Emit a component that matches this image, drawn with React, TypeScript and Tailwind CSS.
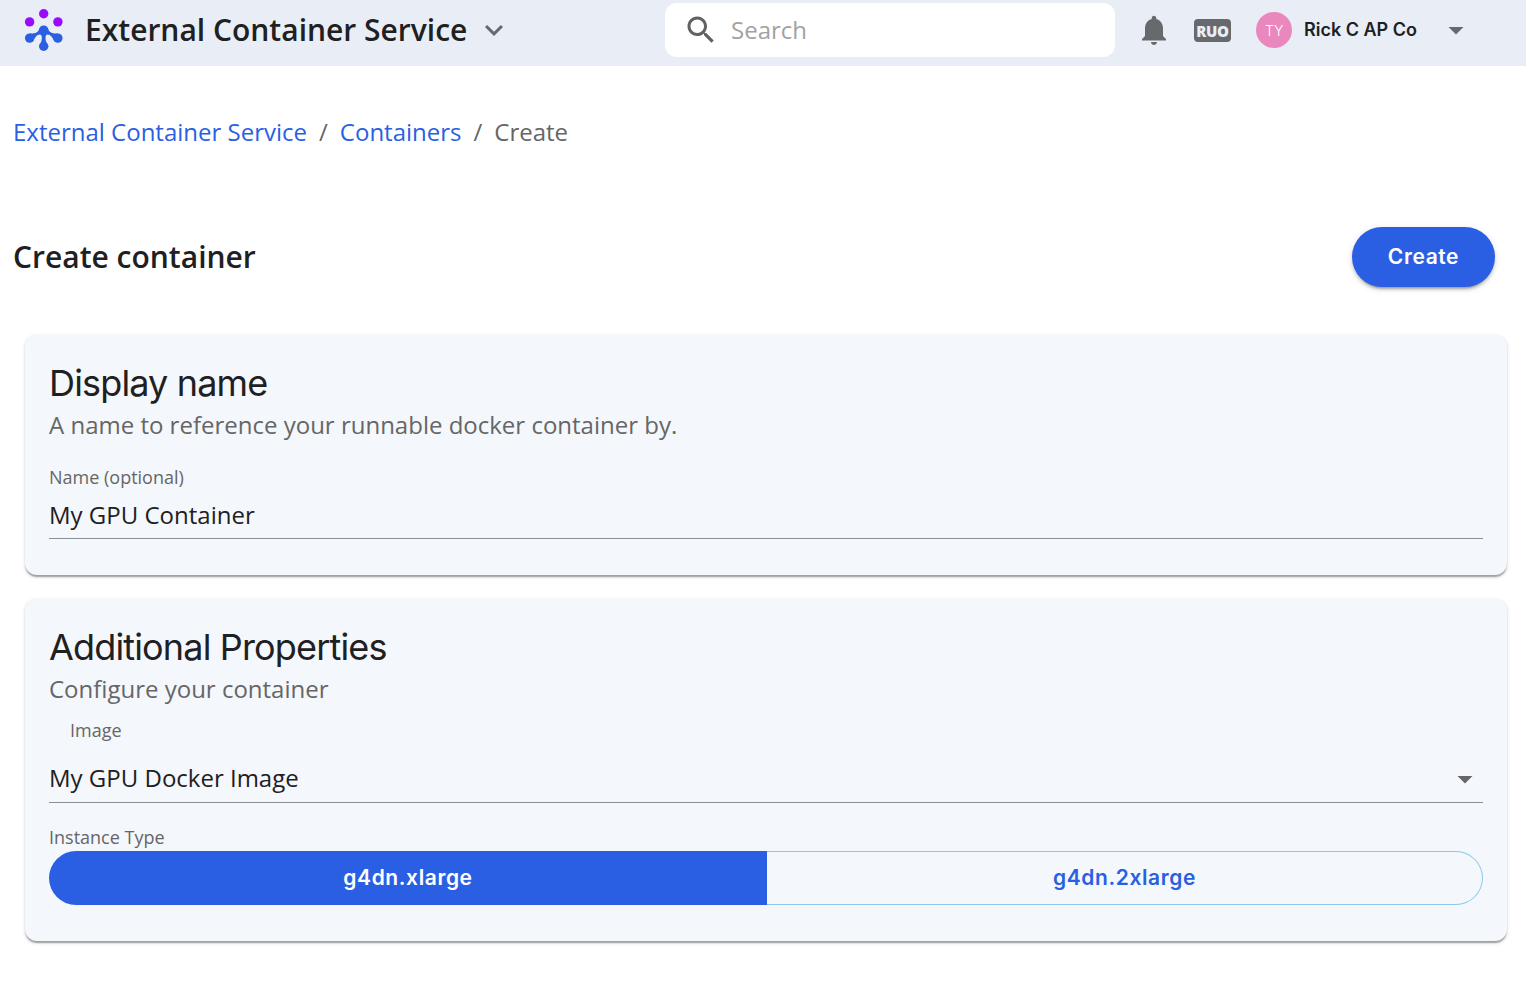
import React from "react";

const OS = "font-['Open_Sans',sans-serif]";

function Logo() {
  return (
    <svg className="ml-[24px] shrink-0" width="40" height="44" viewBox="0 0 40 44">
      <g fill="#9a0bfb">
        <circle cx="19.7" cy="5.7" r="4.7" />
        <circle cx="5.6" cy="13.9" r="4.7" />
        <circle cx="33.9" cy="13.9" r="4.7" />
      </g>
      <g fill="#2a5fe3">
        <circle cx="5.6" cy="30.1" r="4.7" />
        <circle cx="33.9" cy="30.1" r="4.7" />
        <circle cx="19.7" cy="38.3" r="4.7" />
        <path d="M19.7 17.4C22.6 17.4 24 19.4 24.5 21.4C25.3 24.6 28.5 25.6 33.9 25.4L30.3 33.2C28.5 29.2 26.6 26.6 23.6 26.4C21.2 26.4 21 30.6 22.6 35H16.8C18.4 30.6 18.2 26.4 15.8 26.4C12.8 26.6 11 29.2 9.2 33.2L5.6 25.4C11 25.6 14.1 24.6 14.9 21.4C15.4 19.4 16.8 17.4 19.7 17.4Z" />
      </g>
    </svg>
  );
}

function MIcon({ d, className }: { d: string; className: string }) {
  return (
    <svg className={`shrink-0 ${className}`} width="36" height="36" viewBox="0 0 24 24" fill="currentColor">
      <path d={d} />
    </svg>
  );
}

const CARET = "M7 10l5 5 5-5z";
const CHEVRON = "M7.41 8.59 12 13.17l4.59-4.58L18 10l-6 6-6-6 1.41-1.41z";
const SEARCH =
  "M15.5 14h-.79l-.28-.27C15.41 12.59 16 11.11 16 9.5 16 5.91 13.09 3 9.5 3S3 5.91 3 9.5 5.91 16 9.5 16c1.61 0 3.09-.59 4.23-1.57l.27.28v.79l5 4.99L20.49 19l-4.99-5zm-6 0C7.01 14 5 11.99 5 9.5S7.01 5 9.5 5 14 7.01 14 9.5 11.99 14 9.5 14z";
const BELL =
  "M12 22c1.1 0 2-.9 2-2h-4c0 1.1.89 2 2 2zm6-6v-5c0-3.07-1.64-5.64-4.5-6.32V4c0-.83-.67-1.5-1.5-1.5s-1.5.67-1.5 1.5v.68C7.63 5.36 6 7.92 6 11v5l-2 2v1h16v-1l-2-2z";

const CARD =
  "mx-[25px] w-[1482px] rounded-[12px] bg-[#f4f7fc] px-[24px] shadow-[0_3px_1.5px_-1.5px_rgba(0,0,0,0.2),0_1.5px_1.5px_0_rgba(0,0,0,0.14),0_1.5px_4.5px_0_rgba(0,0,0,0.12)]";
const H2 = "font-[Inter,sans-serif] text-[36px] leading-[50px] tracking-[-0.84px]";

export default function App() {
  return (
    <div className={`h-[990px] w-[1526px] overflow-hidden bg-white text-[#1f2022] ${OS}`}>
      <header className="flex h-[66px] items-start bg-[#e9eef6]">
        <div className="flex h-[60px] items-center">
          <Logo />
          <span className="ml-[21px] whitespace-nowrap text-[30px] font-semibold leading-[40px]">External Container Service</span>
          <MIcon d={CHEVRON} className="ml-[9px] text-[#666a6d]" />
        </div>
        <div className="ml-auto mt-[3px] flex h-[54px] w-[450px] items-center rounded-[12px] bg-white">
          <MIcon d={SEARCH} className="ml-[18px] text-[#616161]" />
          <span className="ml-[12px] text-[24px] text-[#a2a2a2]">Search</span>
        </div>
        <div className="flex h-[60px] w-[411px] items-center font-[Inter,sans-serif]">
          <MIcon d={BELL} className="ml-[21px] text-[#666a6d]" />
          <span className={`ml-[22px] mt-px flex h-[23px] w-[37px] items-center justify-center rounded-[4px] bg-[#666a6d] text-[15px] font-extrabold leading-[22px] tracking-[-0.4px] text-[#e9eef6] ${OS}`}>RUO</span>
          <span className="ml-[25px] flex size-[36px] items-center justify-center rounded-full bg-[#ea88bd] text-[14px] font-light tracking-[-0.3px] text-white">TY</span>
          <span className="mb-[2px] ml-[12px] whitespace-nowrap text-[18px] font-semibold">Rick C AP Co</span>
          <MIcon d={CARET} className="ml-[21px] text-[#666a6d]" />
        </div>
      </header>

      <nav className="mt-[48px] flex h-[36px] items-center pl-[13px] text-[24px] text-[#666]">
        <a className="text-[#2a5fe3]">External Container Service</a>
        <span className="mx-[12px]">/</span>
        <a className="text-[#2a5fe3]">Containers</a>
        <span className="mx-[12px]">/</span>
        <span>Create</span>
      </nav>

      <div className="mt-[77px] flex h-[60px] items-center justify-between pl-[13px] pr-[31px]">
        <h1 className="mb-[2px] text-[30px] font-semibold">Create container</h1>
        <button className="h-[60px] w-[143px] rounded-full bg-[#2a5fe3] pb-px font-[Inter,sans-serif] text-[21px] font-semibold tracking-[0.6px] text-white shadow-[0_4.5px_1.5px_-3px_rgba(0,0,0,0.2),0_3px_3px_0_rgba(0,0,0,0.14),0_1.5px_7.5px_0_rgba(0,0,0,0.12)]">Create</button>
      </div>

      <section className={`mt-[48px] h-[240px] pt-[23px] ${CARD}`}>
        <h2 className={H2}>Display name</h2>
        <p className="text-[24px] leading-[34px] text-[#666]">A name to reference your runnable docker container by.</p>
        <label className="mt-[22px] block text-[18px] leading-[26px] text-[#666]">Name (optional)</label>
        <div className="h-[49px] border-b border-[#8b9095] pt-[7px] text-[24px] leading-[36px]">My GPU Container</div>
      </section>

      <section className={`mt-[24px] h-[342px] pt-[23px] ${CARD}`}>
        <h2 className={H2}>Additional Properties</h2>
        <p className="text-[24px] leading-[34px] text-[#666]">Configure your container</p>
        <label className="mt-[11px] block pl-[21px] text-[18px] leading-[26px] text-[#666]">Image</label>
        <div className="mt-[11px] flex h-[49px] items-center border-b border-[#8b9095] text-[24px]">
          <span>My GPU Docker Image</span>
          <MIcon d={CARET} className="ml-auto mt-[2px] text-[#666]" />
        </div>
        <label className="mt-[21px] block text-[18px] leading-[27px] text-[#666]">Instance Type</label>
        <div className="flex h-[54px] font-[Inter,sans-serif] text-[21px] font-semibold tracking-[0.6px]">
          <button className="w-[718px] rounded-l-full bg-[#2a5fe3] text-white">g4dn.xlarge</button>
          <button className="w-[716px] rounded-r-full border border-l-0 border-[#8bc8ec] text-[#2a5fe3]">g4dn.2xlarge</button>
        </div>
      </section>
    </div>
  );
}
